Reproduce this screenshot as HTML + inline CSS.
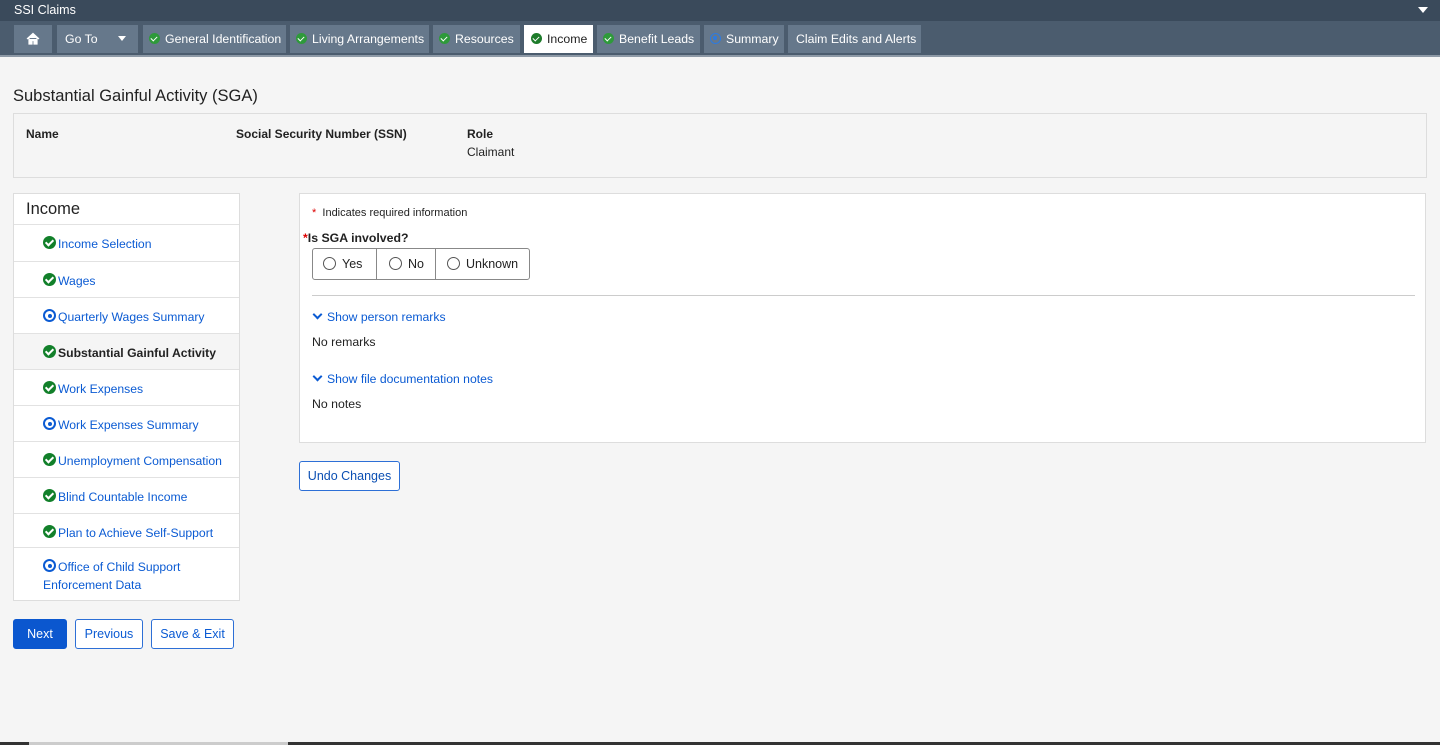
<!DOCTYPE html>
<html><head><meta charset="utf-8"><style>
*{box-sizing:border-box;margin:0;padding:0}
body{width:1440px;height:745px;background:#f5f5f5;font-family:"Liberation Sans",sans-serif;font-size:12px;color:#222;position:relative;overflow:hidden}
.a{position:absolute}
.top{left:0;top:0;width:1440px;height:21px;background:#3a4a5b;color:#fff;font-size:12.5px;padding:3px 0 0 14px}
.nav{left:0;top:21px;width:1440px;height:36px;background:#4b5c6e;border-bottom:2px solid #8d99a6}
.tab{top:4px;height:28px;background:#66788b;color:#fff;font-size:12.3px;line-height:28px;padding-left:8px;white-space:nowrap}
.tab.on{background:#fff;color:#222}
.ck{display:inline-block;width:11px;height:11px;border-radius:50%;background:#2e9a3a;vertical-align:-1px;margin-right:5px;position:relative}
.ck:after{content:"";position:absolute;left:3px;top:2px;width:3px;height:5px;border:solid #fff;border-width:0 1.6px 1.6px 0;transform:rotate(45deg)}
.on .ck{background:#1d7b2a}
.tg{display:inline-block;width:11px;height:11px;border-radius:50%;border:1.5px solid #2d7be0;vertical-align:-1px;margin-right:5px;position:relative}
.tg:after{content:"";position:absolute;left:2px;top:2px;width:4px;height:4px;border-radius:50%;background:#2d7be0}
.side{left:13px;top:193px;width:227px;height:408px;background:#fff;border:1px solid #ddd}
.si{position:absolute;left:0;width:225px;border-top:1px solid #e2e2e2;padding-left:29px;color:#0b5bd3;font-size:12.2px;line-height:18px}
.gk{display:inline-block;width:13px;height:13px;border-radius:50%;background:#12802a;position:relative;vertical-align:-1px;margin-right:2px}
.gk:after{content:"";position:absolute;left:4px;top:2px;width:3px;height:6px;border:solid #fff;border-width:0 2px 2px 0;transform:rotate(45deg)}
.bk{display:inline-block;width:13px;height:13px;border-radius:50%;border:2px solid #0b5bd3;position:relative;vertical-align:-1px;margin-right:2px}
.bk:after{content:"";position:absolute;left:2.5px;top:2.5px;width:4px;height:4px;border-radius:50%;background:#0b5bd3}
.btn{height:30px;border:1px solid #2d6fd6;border-radius:3px;background:#fff;color:#0b5bd3;font-size:12.5px;line-height:28px;text-align:center}
.rad{display:inline-block;width:13px;height:13px;border-radius:50%;border:1.5px solid #555;vertical-align:-2px;margin-right:6px}
.chev{display:inline-block;width:7px;height:7px;border:solid #0b5bd3;border-width:0 2px 2px 0;transform:rotate(45deg);margin:0 6px 3px 2px}
</style></head><body>
<div class="a top">SSI Claims<span style="position:absolute;right:12px;top:7px;border:5px solid transparent;border-top:6px solid #fff"></span></div>
<div class="a nav">
<div class="a tab" style="left:14px;width:38px;padding:0"><svg width="38" height="28" viewBox="0 0 38 28"><path d="M13 14 L19 8.5 L25 14 M15 13 V19 H18 V15.5 H20 V19 H23 V13" fill="#fff" stroke="#fff" stroke-width="1.2"/></svg></div>
<div class="a tab" style="left:57px;width:81px">Go To<span style="position:absolute;left:61px;top:11px;border:4.5px solid transparent;border-top:5px solid #fff"></span></div>
<div class="a tab" style="left:143px;width:143px;padding-left:6px"><span class="ck"></span>General Identification</div>
<div class="a tab" style="left:290px;width:139px;padding-left:6px"><span class="ck"></span>Living Arrangements</div>
<div class="a tab" style="left:433px;width:87px;padding-left:6px"><span class="ck"></span>Resources</div>
<div class="a tab on" style="left:524px;width:69px;padding-left:7px"><span class="ck"></span>Income</div>
<div class="a tab" style="left:597px;width:103px;padding-left:6px"><span class="ck"></span>Benefit Leads</div>
<div class="a tab" style="left:704px;width:80px;padding-left:6px"><span class="tg"></span>Summary</div>
<div class="a tab" style="left:788px;width:133px">Claim Edits and Alerts</div>
</div>
<div class="a" style="left:13px;top:87px;font-size:16.5px">Substantial Gainful Activity (SGA)</div>
<div class="a" style="left:13px;top:113px;width:1414px;height:65px;border:1px solid #ddd;background:#f5f5f5;font-size:12px">
<b class="a" style="left:12px;top:13px">Name</b><b class="a" style="left:222px;top:13px">Social Security Number (SSN)</b><b class="a" style="left:453px;top:13px">Role</b><span class="a" style="left:453px;top:31px">Claimant</span></div>
<div class="a side">
<div class="a" style="left:12px;top:6px;font-size:16.5px">Income</div>
<div class="si" style="top:30px;height:37px;padding-top:10px"><span class="gk"></span>Income Selection</div>
<div class="si" style="top:67px;height:36px;padding-top:10px"><span class="gk"></span>Wages</div>
<div class="si" style="top:103px;height:36px;padding-top:10px"><span class="bk"></span>Quarterly Wages Summary</div>
<div class="si" style="top:139px;height:36px;padding-top:10px;background:#f5f5f5;color:#222;font-weight:bold"><span class="gk"></span>Substantial Gainful Activity</div>
<div class="si" style="top:175px;height:36px;padding-top:10px"><span class="gk"></span>Work Expenses</div>
<div class="si" style="top:211px;height:36px;padding-top:10px"><span class="bk"></span>Work Expenses Summary</div>
<div class="si" style="top:247px;height:36px;padding-top:10px"><span class="gk"></span>Unemployment Compensation</div>
<div class="si" style="top:283px;height:36px;padding-top:10px"><span class="gk"></span>Blind Countable Income</div>
<div class="si" style="top:319px;height:36px;padding-top:10px"><span class="gk"></span>Plan to Achieve Self-Support</div>
<div class="si" style="top:353px;height:53px;padding-top:10px"><span class="bk"></span>Office of Child Support<br>Enforcement Data</div>
</div>
<div class="a" style="left:299px;top:193px;width:1127px;height:250px;background:#fff;border:1px solid #ddd">
<div class="a" style="left:12px;top:13px;font-size:11px"><span style="color:#d00">*</span>&nbsp; Indicates required information</div>
<div class="a" style="left:3px;top:37px;font-size:12.3px;font-weight:bold"><span style="color:#d00">*</span>Is SGA involved?</div>
<div class="a" style="left:12px;top:54px;width:218px;height:32px;border:1px solid #888;border-radius:3px;font-size:12.5px">
<div class="a" style="left:10px;top:8px"><span class="rad"></span>Yes</div>
<div class="a" style="left:63px;top:0;height:30px;border-left:1px solid #888"></div>
<div class="a" style="left:76px;top:8px"><span class="rad"></span>No</div>
<div class="a" style="left:122px;top:0;height:30px;border-left:1px solid #888"></div>
<div class="a" style="left:134px;top:8px"><span class="rad"></span>Unknown</div></div>
<div class="a" style="left:12px;top:101px;width:1103px;border-top:1px solid #ccc"></div>
<div class="a" style="left:12px;top:116px;color:#0b5bd3;font-size:12.2px"><span class="chev"></span>Show person remarks</div>
<div class="a" style="left:12px;top:141px;font-size:12.3px">No remarks</div>
<div class="a" style="left:12px;top:178px;color:#0b5bd3;font-size:12.2px"><span class="chev"></span>Show file documentation notes</div>
<div class="a" style="left:12px;top:203px;font-size:12.3px">No notes</div>
</div>
<div class="a btn" style="left:299px;top:461px;width:101px;color:#0b4fb3;border-color:#2d6fd6">Undo Changes</div>
<div class="a btn" style="left:13px;top:619px;width:54px;background:#0b57cf;color:#fff;border-color:#0b57cf">Next</div>
<div class="a btn" style="left:75px;top:619px;width:68px">Previous</div>
<div class="a btn" style="left:151px;top:619px;width:83px">Save &amp; Exit</div>
<div class="a" style="left:0;top:742px;width:1440px;height:3px;background:#333"></div>
<div class="a" style="left:29px;top:742px;width:259px;height:3px;background:#ccc"></div>
</body></html>
